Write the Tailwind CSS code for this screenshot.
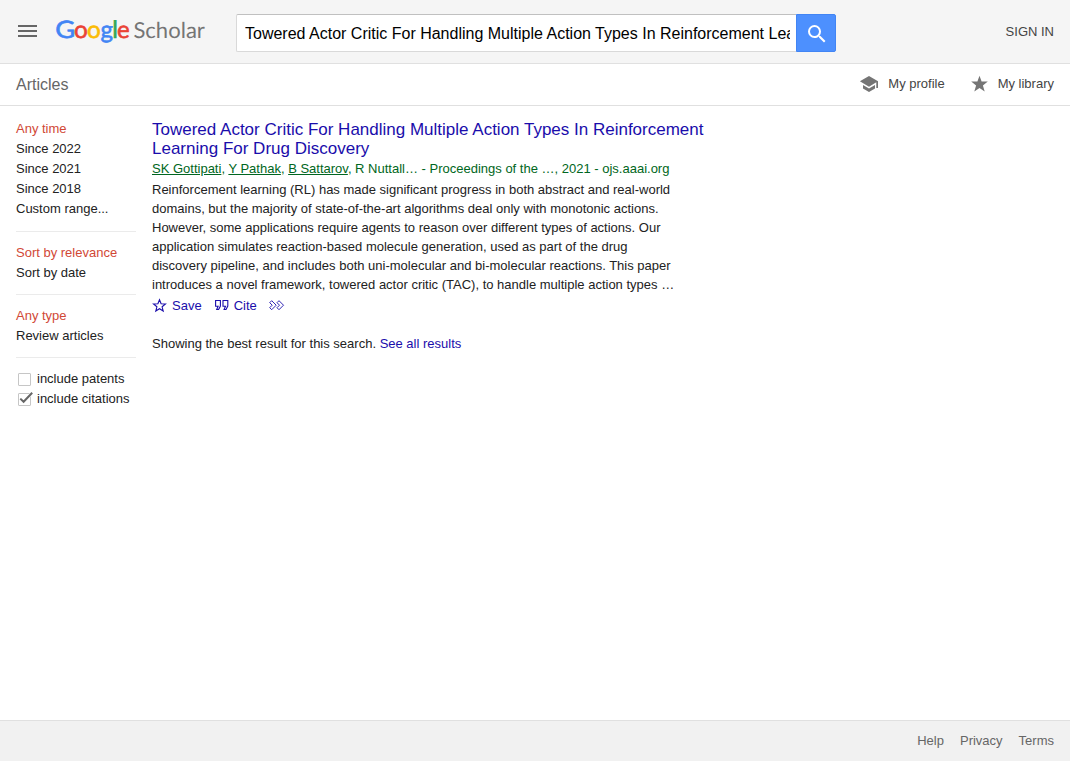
<!DOCTYPE html>
<html lang="en">
<head>
<meta charset="utf-8">
<title>Google Scholar</title>
<script src="https://cdn.jsdelivr.net/npm/@tailwindcss/browser@4"></script>
</head>
<body class="flex h-screen flex-col overflow-hidden bg-white font-['Liberation_Sans',Arial,sans-serif] text-[13px] leading-5 text-[#222]">
<header class="flex h-16 shrink-0 items-start border-b border-[#e0e0e0] bg-[#f5f5f5] pr-4">
  <button class="mt-[25px] ml-[18px] flex w-[19px] flex-col gap-[3px]" aria-label="Menu">
    <span class="h-0.5 w-full bg-[#666]"></span><span class="h-0.5 w-full bg-[#666]"></span><span class="h-0.5 w-full bg-[#666]"></span>
  </button>
  <svg class="ml-[18px] mt-3 h-9 w-[152px] shrink-0" viewBox="0 0 152 36" font-family="Lato, sans-serif" text-rendering="geometricPrecision">
    <g font-size="24" font-weight="400" stroke-width=".6">
      <text x=".3" y="26" textLength="20" lengthAdjust="spacingAndGlyphs" fill="#4285f4" stroke="#4285f4">G</text>
      <text x="18.900" y="26" textLength="13.800" lengthAdjust="spacingAndGlyphs" fill="#ea4335" stroke="#ea4335">o</text>
      <text x="31.900" y="26" textLength="13.800" lengthAdjust="spacingAndGlyphs" fill="#fbbc05" stroke="#fbbc05">o</text>
      <text x="45.400" y="26" textLength="12.500" lengthAdjust="spacingAndGlyphs" fill="#4285f4" stroke="#4285f4">g</text>
      <text x="57.300" y="26" fill="#34a853" stroke="#34a853">l</text>
      <text x="62.100" y="26" textLength="12.700" lengthAdjust="spacingAndGlyphs" fill="#ea4335" stroke="#ea4335">e</text>
    </g>
    <text x="78.400" y="26" font-size="22" textLength="71.500" lengthAdjust="spacingAndGlyphs" fill="#757575">Scholar</text>
  </svg>
  <form class="mt-3.5 ml-[29px] flex h-[38px] w-[600px]">
    <div class="flex min-w-0 flex-1 items-center rounded-l-[2px] border border-r-0 border-[#d9d9d9] border-t-[#c0c0c0] bg-white pt-0.5 pr-1.5 pl-2">
      <span class="block flex-1 overflow-hidden text-base leading-6 whitespace-nowrap text-black">Towered Actor Critic For Handling Multiple Action Types In Reinforcement Learning For Drug Discovery</span>
    </div>
    <button type="button" aria-label="Search" class="flex w-10 items-center justify-center rounded-r-[2px] border border-[#4285f4] bg-[#4d90fe] pt-0.5 pl-0.5">
      <svg class="size-6" viewBox="0 0 24 24" fill="#fff"><path d="M15.5 14h-.79l-.28-.27A6.47 6.47 0 0 0 16 9.500 6.500 6.500 0 1 0 9.500 16c1.610 0 3.090-.59 4.230-1.570l.27.28v.79l5 4.990L20.490 19l-4.990-5zm-6 0C7.010 14 5 11.990 5 9.500S7.010 5 9.500 5 14 7.010 14 9.500 11.990 14 9.500 14z"/></svg>
    </button>
  </form>
  <a class="mt-[22px] ml-auto text-[#444]">SIGN IN</a>
</header>
<nav class="flex h-[42px] shrink-0 items-center border-b border-[#e0e0e0] px-4 text-[#444]">
  <h1 class="text-base text-[#666]">Articles</h1>
  <a class="-mt-0.5 ml-auto flex items-center">
    <svg class="mr-[9px] size-5" viewBox="0 0 20 20" fill="#757575"><path d="M10 2 .9 7.300 10 12.700l7.300-4.400V14H19V7.300zM4 11v3.500l6 3.500 6-3.500V11l-6 3.600z"/></svg><span>My profile</span>
  </a>
  <a class="-mt-0.5 ml-6 flex items-center">
    <svg class="mr-[9px] size-5" viewBox="0 0 20 20" fill="#757575"><path d="m10.500 1.700 2.100 5.700 6.200.2-4.900 3.800 1.800 6-5.200-3.500-5.200 3.500 1.800-6-4.900-3.800 6.200-.2z"/></svg><span>My library</span>
  </a>
</nav>
<main class="flex flex-1 pl-4">
  <aside class="mr-4 w-[120px] pt-[13px]">
    <ul class="mb-[11px] border-b border-[#ebebeb] pb-3">
      <li class="text-[#d14836]">Any time</li><li>Since 2022</li><li>Since 2021</li><li>Since 2018</li><li>Custom range...</li>
    </ul>
    <ul class="mb-[11px] border-b border-[#ebebeb] pb-[11px]"><li class="text-[#d14836]">Sort by relevance</li><li>Sort by date</li></ul>
    <ul class="mb-[11px] border-b border-[#ebebeb] pb-[11px]"><li class="text-[#d14836]">Any type</li><li>Review articles</li></ul>
    <ul>
      <li class="flex items-center"><svg class="mr-[3px] ml-0.5 h-4 w-4 shrink-0" viewBox="0 0 16 16" fill="none"><rect x=".5" y="2.500" width="12" height="12" rx=".5" stroke="#c6c6c6"/></svg>include patents</li>
      <li class="flex items-center"><svg class="mr-[3px] ml-0.5 h-4 w-4 shrink-0" viewBox="0 0 16 16" fill="none"><rect x=".5" y="2.500" width="12" height="12" rx=".5" stroke="#c6c6c6"/><path d="m2.300 7.800 3.200 3.200 8.700-9.200" stroke="#fff" stroke-width="3"/><path d="m2.300 7.600 3.300 3.200 8.600-9" stroke="#666" stroke-width="2"/></svg>include citations</li>
    </ul>
  </aside>
  <section class="w-[570px] pt-3.5">
    <h3 class="text-[17px] leading-[19px] text-[#1a0dab]">Towered Actor Critic For Handling Multiple Action Types In Reinforcement<br>Learning For Drug Discovery</h3>
    <p class="mt-px leading-5 text-[#006621]"><a class="underline">SK Gottipati</a>, <a class="underline">Y Pathak</a>, <a class="underline">B Sattarov</a>, R Nuttall… - Proceedings of the …, 2021 - ojs.aaai.org</p>
    <p class="mt-px leading-[19px]">Reinforcement learning (RL) has made significant progress in both abstract and real-world<br>domains, but the majority of state-of-the-art algorithms deal only with monotonic actions.<br>However, some applications require agents to reason over different types of actions. Our<br>application simulates reaction-based molecule generation, used as part of the drug<br>discovery pipeline, and includes both uni-molecular and bi-molecular reactions. This paper<br>introduces a novel framework, towered actor critic (TAC), to handle multiple action types …</p>
    <div class="mt-0.5 flex items-center text-[#1a0dab]">
      <svg class="mr-[5px] h-4 w-[15px]" viewBox="0 0 15 16" fill="none" stroke="#1a0dab" stroke-width="1.100"><path d="m7.500 1.700 1.600 4 4.400.3-3.400 2.800 1.100 4.200-3.700-2.300-3.700 2.300 1.100-4.200L1.500 6l4.400-.3z"/></svg>Save
      <svg class="mr-1 ml-3 h-4 w-4" viewBox="0 0 16 16" fill="none" stroke="#1a0dab" stroke-width="1.100"><path d="M1.600 2.500h4.800v5.500L4.600 11.500H2.700l1.400-3.300H1.600zM9 2.500h4.800v5.500L12 11.500h-1.900l1.400-3.300H9z"/></svg>Cite
      <svg class="ml-3 h-4 w-4" viewBox="0 0 16 16" fill="none" stroke="#1a0dab" stroke-width=".9"><path d="M.7 4.700 2.700 2.700l4.500 4.500-4.500 4.500-2-2 2.500-2.500zM8 4.700l2-2 4.500 4.500-4.500 4.500-2-2 2.500-2.500z"/></svg>
    </div>
    <p class="mt-[18px]">Showing the best result for this search. <a class="text-[#1a0dab]">See all results</a></p>
  </section>
</main>
<footer class="flex h-[41px] shrink-0 items-center justify-end gap-4 border-t border-[#e0e0e0] bg-[#f1f1f1] px-4 text-[#666]">
  <a>Help</a><a>Privacy</a><a>Terms</a>
</footer>
</body>
</html>
